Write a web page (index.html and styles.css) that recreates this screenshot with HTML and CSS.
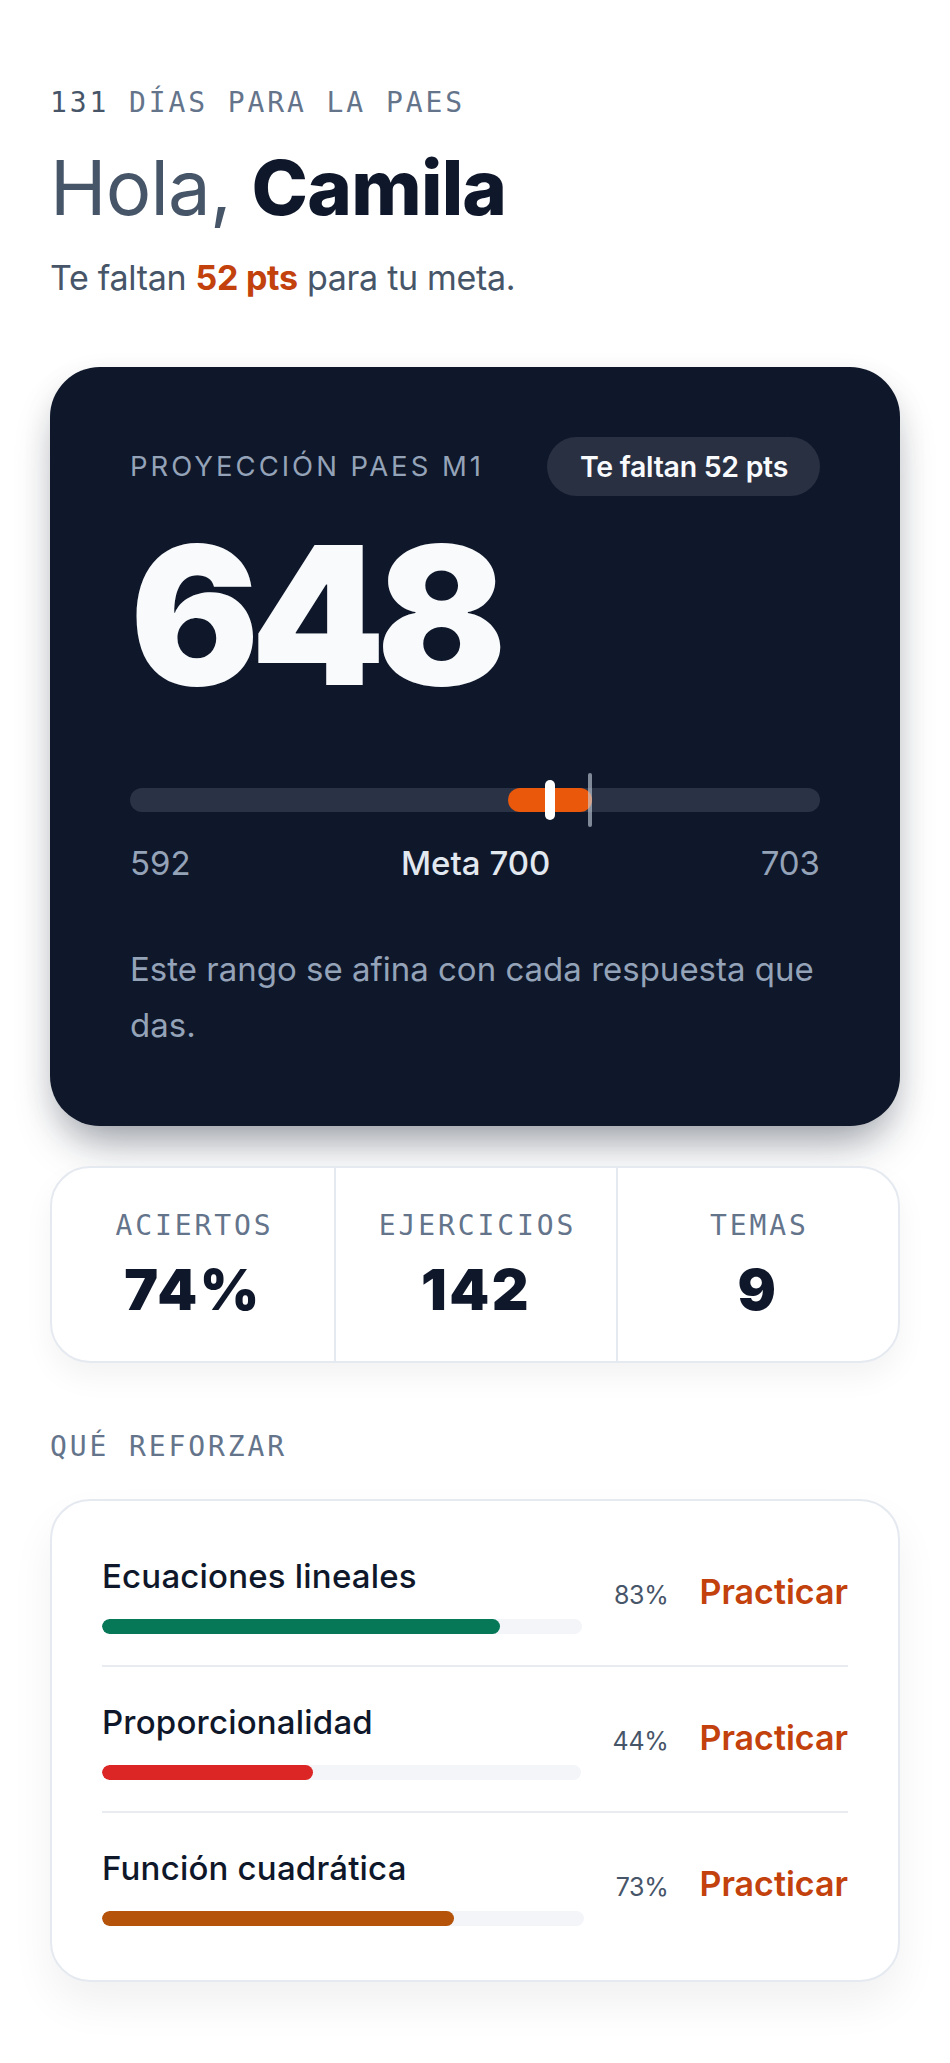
FILE: index.html
```html
<!DOCTYPE html>
<html lang="es">
<head>
<meta charset="utf-8">
<title>PAES – Camila</title>
<link rel="stylesheet" href="styles.css">
</head>
<body>
<main class="page">
  <header class="intro">
    <p class="eyebrow"><span class="eyebrow-num">131</span> DÍAS PARA LA PAES</p>
    <h1 class="greeting"><span class="greeting-soft">Hola,</span> <strong class="greeting-name">Camila</strong></h1>
    <p class="lead">Te faltan <strong class="lead-accent">52 pts</strong> para tu meta.</p>
  </header>

  <section class="projection">
    <div class="projection-head">
      <span class="projection-label">PROYECCIÓN PAES M1</span>
      <span class="badge">Te faltan 52 pts</span>
    </div>
    <div class="score">648</div>
    <div class="range">
      <div class="range-track">
        <div class="range-band" style="left:54.8%;width:12.2%"></div>
        <div class="range-marker" style="left:60.9%"></div>
        <div class="range-goal" style="left:66.6%"></div>
      </div>
      <div class="range-labels">
        <span>592</span>
        <span class="range-goal-label">Meta 700</span>
        <span>703</span>
      </div>
    </div>
    <p class="projection-note">Este rango se afina con cada respuesta que das.</p>
  </section>

  <section class="stats">
    <div class="stat">
      <span class="stat-label">ACIERTOS</span>
      <span class="stat-value">74%</span>
    </div>
    <div class="stat">
      <span class="stat-label">EJERCICIOS</span>
      <span class="stat-value">142</span>
    </div>
    <div class="stat">
      <span class="stat-label">TEMAS</span>
      <span class="stat-value">9</span>
    </div>
  </section>

  <h2 class="section-title">QUÉ REFORZAR</h2>

  <section class="topics">
    <div class="topic">
      <div class="topic-main">
        <span class="topic-name">Ecuaciones lineales</span>
        <div class="topic-bar"><div class="topic-fill fill-green" style="width:83%"></div></div>
      </div>
      <div class="topic-side">
        <span class="topic-pct">83%</span>
        <span class="topic-action">Practicar</span>
      </div>
    </div>
    <div class="topic">
      <div class="topic-main">
        <span class="topic-name">Proporcionalidad</span>
        <div class="topic-bar"><div class="topic-fill fill-red" style="width:44%"></div></div>
      </div>
      <div class="topic-side">
        <span class="topic-pct">44%</span>
        <span class="topic-action">Practicar</span>
      </div>
    </div>
    <div class="topic">
      <div class="topic-main">
        <span class="topic-name">Función cuadrática</span>
        <div class="topic-bar"><div class="topic-fill fill-amber" style="width:73%"></div></div>
      </div>
      <div class="topic-side">
        <span class="topic-pct">73%</span>
        <span class="topic-action">Practicar</span>
      </div>
    </div>
  </section>
</main>
</body>
</html>
```

FILE: styles.css
```css
* { box-sizing: border-box; }

html, body {
  margin: 0;
  padding: 0;
  background: #ffffff;
}

body {
  font-family: Inter, "Noto Sans", "Liberation Sans", sans-serif;
  color: #0f172a;
}

.page {
  padding: 85px 50px 80px;
}

/* ---------- intro ---------- */
.eyebrow,
.section-title,
.stat-label {
  font-family: "DejaVu Sans Mono", "Liberation Mono", monospace;
  font-size: 28px;
  font-weight: 400;
  line-height: 36.4px;
  letter-spacing: 2.9px;
  color: #64748b;
  margin: 0;
}

.eyebrow-num {
  color: #475569;
}

.greeting {
  margin: 25px 0 0;
  font-size: 76px;
  line-height: 83.6px;
  font-weight: 400;
  letter-spacing: -0.8px;
}

.greeting-soft {
  color: #475569;
}

.greeting-name {
  color: #0f172a;
  font-weight: 800;
}

.lead {
  margin: 24px 0 0;
  font-size: 34px;
  line-height: 47.6px;
  color: #475569;
  letter-spacing: -0.3px;
}

.lead-accent {
  color: #c2410c;
  font-weight: 700;
}

/* ---------- projection card ---------- */
.projection {
  margin-top: 65px;
  background: #0f172a;
  border-radius: 50px;
  padding: 70px 80px 72px;
  color: #f8fafc;
  box-shadow: 0 26px 46px -14px rgba(15, 23, 42, 0.42), 0 10px 30px rgba(15, 23, 42, 0.08);
}

.projection-head {
  display: flex;
  align-items: center;
  justify-content: space-between;
}

.projection-label {
  font-size: 27.5px;
  letter-spacing: 3px;
  color: #94a3b8;
  font-weight: 400;
}

.badge {
  display: inline-flex;
  align-items: center;
  height: 59px;
  padding: 0 32px 0 33px;
  border-radius: 30px;
  background: #283042;
  color: #f8fafc;
  font-size: 28.5px;
  font-weight: 600;
  letter-spacing: -0.3px;
}

.score {
  margin-top: 23px;
  font-size: 192px;
  line-height: 192px;
  font-weight: 900;
  letter-spacing: -9px;
  color: #f8fafc;
}

.range {
  margin-top: 77px;
}

.range-track {
  position: relative;
  height: 24px;
  border-radius: 12px;
  background: #2a3345;
}

.range-band {
  position: absolute;
  top: 0;
  bottom: 0;
  border-radius: 12px;
  background: #ea580c;
}

.range-marker {
  position: absolute;
  top: -8px;
  width: 10px;
  height: 40px;
  margin-left: -5px;
  border-radius: 5px;
  background: #ffffff;
}

.range-goal {
  position: absolute;
  top: -15px;
  width: 4px;
  height: 54px;
  margin-left: -2px;
  border-radius: 2px;
  background: rgba(203, 213, 225, 0.6);
}

.range-labels {
  margin-top: 28px;
  display: flex;
  justify-content: space-between;
  font-size: 33px;
  line-height: 46px;
  color: #94a3b8;
}

.range-goal-label {
  color: #e2e8f0;
  font-weight: 500;
}

.projection-note {
  margin: 55px 0 0;
  font-size: 33px;
  line-height: 56.7px;
  color: #94a3b8;
}

/* ---------- stats ---------- */
.stats {
  margin-top: 40px;
  display: grid;
  grid-template-columns: repeat(3, 1fr);
  border: 2px solid #e5e9f0;
  border-radius: 40px;
  background: #ffffff;
  box-shadow: 0 14px 30px rgba(15, 23, 42, 0.05);
  overflow: hidden;
}

.stat {
  display: flex;
  flex-direction: column;
  align-items: center;
  padding: 40px 0 38px;
}

.stat + .stat {
  border-left: 2px solid #e5e9f0;
}

.stat-label {
  padding-left: 2.9px;
}

.stat-value {
  margin-top: 13px;
  font-size: 57px;
  line-height: 66px;
  font-weight: 900;
  letter-spacing: 2.5px;
  color: #0f172a;
}

/* ---------- topics ---------- */
.section-title {
  margin-top: 66px;
}

.topics {
  margin-top: 33px;
  border: 2px solid #e5e9f0;
  border-radius: 40px;
  background: #ffffff;
  padding: 20px 50px 23px;
  box-shadow: 0 22px 44px rgba(15, 23, 42, 0.06);
}

.topic {
  display: flex;
  align-items: center;
  gap: 32px;
  padding: 34px 0 31px;
}

.topic + .topic {
  border-top: 2px solid #e8ecf1;
}

.topic-main {
  flex: 1;
  display: flex;
  flex-direction: column;
}

.topic-name {
  font-size: 33px;
  line-height: 42px;
  font-weight: 500;
  color: #0f172a;
  letter-spacing: 0.2px;
}

.topic-bar {
  margin-top: 22px;
  height: 15px;
  border-radius: 8px;
  background: #f3f5f9;
  overflow: hidden;
}

.topic-fill {
  height: 100%;
  border-radius: 8px;
}

.fill-green { background: #067857; }
.fill-red { background: #dc2626; }
.fill-amber { background: #b45309; }

.topic-side {
  display: flex;
  align-items: baseline;
  gap: 31px;
  padding-bottom: 6px;
}

.topic-pct {
  font-size: 25px;
  letter-spacing: -0.3px;
  color: #475569;
}

.topic-action {
  font-size: 34px;
  font-weight: 600;
  color: #c2410c;
}
```
